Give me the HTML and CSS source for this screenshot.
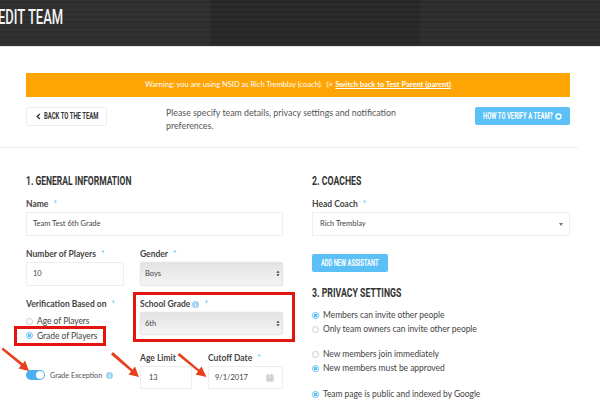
FILE: index.html
```html
<!DOCTYPE html>
<html lang="en">
<head>
<meta charset="utf-8">
<title>Edit Team</title>
<link rel="stylesheet" href="styles.css">
</head>
<body>
<header class="hero"><h1 class="hero-title"><span>EDIT TEAM</span></h1></header>
<main class="page">
  <div class="warning">Warning: you are using NSID as Rich Tremblay (coach).
    <svg class="switch-icon" viewBox="0 0 10 10"><path d="M4 1.500H1.500v7H4M4 5h2V3l3 2-3 2V5" fill="none" stroke="#fff" stroke-width="1"/></svg>
    <a class="warning-link" href="#">Switch back to Test Parent (parent)</a></div>
  <div class="intro">
    <a class="btn-back" href="#"><svg class="back-icon" viewBox="0 0 6 8"><path d="M4.500 1 1.500 4l3 3" fill="none" stroke="#333" stroke-width="1.600"/></svg><span class="cond">BACK TO THE TEAM</span></a>
    <p class="intro-text">Please specify team details, privacy settings and notification preferences.</p>
    <a class="btn-blue btn-verify" href="#"><span class="cond">HOW TO VERIFY A TEAM?</span><svg class="verify-icon" viewBox="0 0 8 8"><circle cx="4" cy="4" r="2.800" fill="none" stroke="#fff" stroke-width="1.600"/></svg></a>
  </div>
  <hr class="rule">
  <div class="columns">
    <section class="col">
      <h2 class="section-title title-general"><span>1. GENERAL INFORMATION</span></h2>
      <label class="label label-first">Name <i class="req">*</i></label>
      <div class="input">Team Test 6th Grade</div>
      <div class="pair">
        <div>
          <label class="label">Number of Players <i class="req">*</i></label>
          <div class="input">10</div>
        </div>
        <div>
          <label class="label">Gender <i class="req">*</i></label>
          <div class="select-native">Boys<svg class="updown" viewBox="0 0 6 10"><path d="M3 1 5.400 4H.6zM3 9 .6 6h4.800z" fill="#333"/></svg></div>
        </div>
      </div>
      <div class="pair">
        <div>
          <label class="label">Verification Based on <i class="req">*</i></label>
          <div class="radio radio-a"><i class="dot"></i>Age of Players</div>
          <div class="radio"><i class="dot on"></i>Grade of Players</div>
        </div>
        <div>
          <label class="label">School Grade <svg class="info" viewBox="0 0 10 10"><circle cx="5" cy="5" r="5" fill="#9fd3ef"/><path d="M5 2v1M5 4.200V8" stroke="#fff" stroke-width="1.200"/></svg> <i class="req">*</i></label>
          <div class="select-native select-grade">6th<svg class="updown" viewBox="0 0 6 10"><path d="M3 1 5.400 4H.6zM3 9 .6 6h4.800z" fill="#333"/></svg></div>
        </div>
      </div>
      <div class="pair pair-limits">
        <div class="exception"><span class="toggle"><i></i></span><span class="exception-text">Grade Exception</span><svg class="info" viewBox="0 0 10 10"><circle cx="5" cy="5" r="5" fill="#9fd3ef"/><path d="M5 2v1M5 4.200V8" stroke="#fff" stroke-width="1.200"/></svg></div>
        <div class="limits">
          <div>
            <label class="label">Age Limit</label>
            <div class="input input-short">13</div>
          </div>
          <div>
            <label class="label">Cutoff Date <i class="req">*</i></label>
            <div class="input input-short input-date">9/1/2017<svg class="cal" viewBox="0 0 10 10"><path d="M1 2h8v7.500H1zM1 4h8M3 1v2M7 1v2M3.500 4v5.500M6.500 4v5.500M1 6h8M1 8h8" fill="none" stroke="#aaa" stroke-width=".7"/></svg></div>
          </div>
        </div>
      </div>
    </section>
    <section class="col">
      <h2 class="section-title title-coaches"><span>2. COACHES</span></h2>
      <label class="label label-first">Head Coach <i class="req">*</i></label>
      <div class="input input-coach">Rich Tremblay<i class="caret"></i></div>
      <a class="btn-blue btn-assist" href="#"><span class="cond">ADD NEW ASSISTANT</span></a>
      <h2 class="section-title title-privacy"><span>3. PRIVACY SETTINGS</span></h2>
      <div class="options">
        <div class="radio"><i class="dot on"></i>Members can invite other people</div>
        <div class="radio"><i class="dot"></i>Only team owners can invite other people</div>
      </div>
      <div class="options">
        <div class="radio"><i class="dot"></i>New members join immediately</div>
        <div class="radio"><i class="dot on"></i>New members must be approved</div>
      </div>
      <div class="options options-last">
        <div class="radio"><i class="dot on"></i>Team page is public and indexed by Google</div>
      </div>
    </section>
  </div>
</main>
<div class="callout callout-grade"></div>
<div class="callout callout-school"></div>
<svg class="arrows" viewBox="0 0 600 400">
  <g fill="#e8401f">
    <path d="M1.500 349.500 3 347.500 23 363.500 25 360.500 29 371 18.500 368.500 21 365.500z"/>
    <path d="M111 354.500 113 352 132.500 369.500 135 366.500 139 377 128.500 374.500 131 371.500z"/>
    <path d="M177.500 355 179.500 353 199 369.500 201.500 366.500 206.500 377 195.500 374.500 198 371.500z"/>
  </g>
</svg>
</body>
</html>
```

FILE: styles.css
```css
* { box-sizing: border-box; }
html, body { margin: 0; padding: 0; }
body {
  width: 600px;
  height: 400px;
  overflow: hidden;
  position: relative;
  background: #fff;
  font-family: "Lato", "Open Sans", sans-serif;
  color: #444;
  font-size: 9px;
}
.hero {
  height: 47px;
  background:
    repeating-linear-gradient(180deg, rgba(255,255,255,.02) 0 1px, rgba(0,0,0,.05) 1px 3px, rgba(255,255,255,.012) 3px 5px),
    linear-gradient(90deg, rgba(255,255,255,.02) 0 35%, rgba(0,0,0,.08) 35% 70%, rgba(255,255,255,.01) 70%),
    #2b2b2b;
  border-bottom: 1px solid #e4e4e4;
  overflow: hidden;
}
.hero-title {
  margin: 5px 0 0 -2px;
  font: 500 20px/24px "Roboto", sans-serif;
  color: #f4f4f4;
  white-space: nowrap;
}
.hero-title span { display: inline-block; transform: scaleX(.65); transform-origin: left center; }
.page { padding: 26px 30px 0 26px; }
.warning {
  height: 24px;
  background: #ffa405;
  color: #fff;
  font-size: 7.500px;
  line-height: 24px;
  text-align: center;
  white-space: nowrap;
}
.warning-link { color: #fff; text-decoration: underline; font-weight: 700; }
.switch-icon { width: 7px; height: 7px; margin-left: 2px; vertical-align: -1px; }
.intro {
  display: flex;
  align-items: flex-start;
  height: 40px;
  margin-top: 10px;
}
.cond {
  display: block;
  font: 700 9px/1 "Roboto", sans-serif;
  transform: scaleX(.66);
  transform-origin: left center;
  white-space: nowrap;
}
.btn-back {
  width: 81px;
  height: 19px;
  border: 1px solid #eee;
  border-radius: 2px;
  display: flex;
  align-items: center;
  padding-left: 9px;
  color: #333;
  text-decoration: none;
}
.btn-back .cond { margin-left: 3px; width: 53px; }
.back-icon { width: 5px; height: 7px; }
.intro-text {
  margin: 0 0 0 59px;
  width: 250px;
  font-size: 8.800px;
  line-height: 12.500px;
  color: #555;
}
.btn-blue {
  background: #5bc0f5;
  color: #fff;
  border-radius: 2px;
  text-decoration: none;
  display: flex;
  align-items: center;
  justify-content: center;
}
.btn-verify { width: 95px; height: 18px; margin-left: auto; }
.btn-verify .cond { width: 70px; }
.verify-icon { width: 7px; height: 7px; margin-left: 2px; }
.rule {
  margin: 0 -8px 0 -26px;
  border: 0;
  border-top: 1px solid #eee;
}
.columns { display: grid; grid-template-columns: 257px 258px; column-gap: 29px; }
.section-title {
  margin: 27px 0 0;
  height: 11px;
  font: 700 12.500px/11px "Roboto", sans-serif;
  color: #333;
  white-space: nowrap;
}
.section-title span { display: inline-block; transform-origin: left center; }
.title-general span { transform: scaleX(.68); }
.title-coaches span { transform: scaleX(.70); }
.title-privacy span { transform: scaleX(.70); }
.label {
  display: block;
  height: 12px;
  font-size: 8.500px;
  line-height: 12px;
  font-weight: 700;
  color: #444;
  white-space: nowrap;
}
.label-first { margin-top: 12px; margin-bottom: 2px; }
.req { font-style: normal; font-weight: 400; color: #5bc0f5; margin-left: 3px; }
.input {
  height: 24px;
  border: 1px solid #eee;
  font-size: 7.500px;
  line-height: 22px;
  padding-left: 6px;
  color: #444;
  position: relative;
}
.pair { display: grid; grid-template-columns: 98px 143px; column-gap: 16px; margin-top: 12px; }
.pair .label { margin-bottom: 2px; }
.select-native {
  height: 24px;
  border-radius: 3px;
  background: linear-gradient(180deg, #e2e2e2, #f5f5f5);
  box-shadow: inset 0 0 0 1px #e6e6e6, 0 0 1px #bbb;
  font-size: 7.500px;
  line-height: 24px;
  padding-left: 5px;
  position: relative;
  color: #444;
}
.select-grade { height: 23px; line-height: 23px; }
.updown { position: absolute; right: 3px; top: 8px; width: 4px; height: 7px; }
.radio {
  display: flex;
  align-items: center;
  height: 14px;
  font-size: 8.500px;
  letter-spacing: -.05px;
  color: #444;
  white-space: nowrap;
}
.radio-a { margin-top: 4px; }
.radio-a + .radio { height: 15px; }
.dot {
  width: 7px;
  height: 7px;
  border-radius: 50%;
  border: 1px solid #ccc;
  margin-right: 4px;
  background: #fff;
  flex: none;
}
.dot.on { border-color: #5bc0f5; background: radial-gradient(circle, #5bc0f5 0 1.500px, #fff 1.700px); }
.pair-limits { margin-top: 9px; }
.exception { display: flex; align-items: center; height: 20px; margin-top: 13px; }
.toggle {
  width: 19px;
  height: 10px;
  border-radius: 5px;
  background: #4aaef0;
  position: relative;
  flex: none;
}
.toggle i {
  position: absolute;
  right: 1px;
  top: 1px;
  width: 8px;
  height: 8px;
  border-radius: 50%;
  background: #fff;
}
.exception-text { font-size: 7.200px; margin-left: 5px; margin-right: 4px; white-space: nowrap; color: #555; }
.info { width: 7px; height: 7px; vertical-align: -0.500px; }
.limits { display: grid; grid-template-columns: 52px 75px; column-gap: 16px; }
.input-short { height: 23px; line-height: 21px; padding-left: 8px; }
.input-date { padding-left: 6px; }
.cal { position: absolute; right: 8px; top: 6px; width: 8px; height: 9px; }
.input-coach { padding-left: 7px; }
.caret {
  position: absolute;
  right: 6px;
  top: 10px;
  border: 2px solid transparent;
  border-top: 3px solid #777;
  border-bottom: 0;
}
.btn-assist { width: 76px; height: 18px; margin-top: 18px; }
.btn-assist .cond { width: 58px; transform: scaleX(.64); }
.section-title.title-privacy { margin-top: 15px; }
.options { margin-top: 10px; }
.options + .options { margin-top: 11px; }
.options + .options.options-last { margin-top: 12px; }
.callout { position: absolute; border: 3px solid #e3150f; pointer-events: none; }
.callout-grade { left: 14px; top: 326px; width: 92px; height: 20px; }
.callout-school { left: 133px; top: 292px; width: 162px; height: 50px; }
.arrows { position: absolute; left: 0; top: 0; width: 600px; height: 400px; pointer-events: none; }
```
